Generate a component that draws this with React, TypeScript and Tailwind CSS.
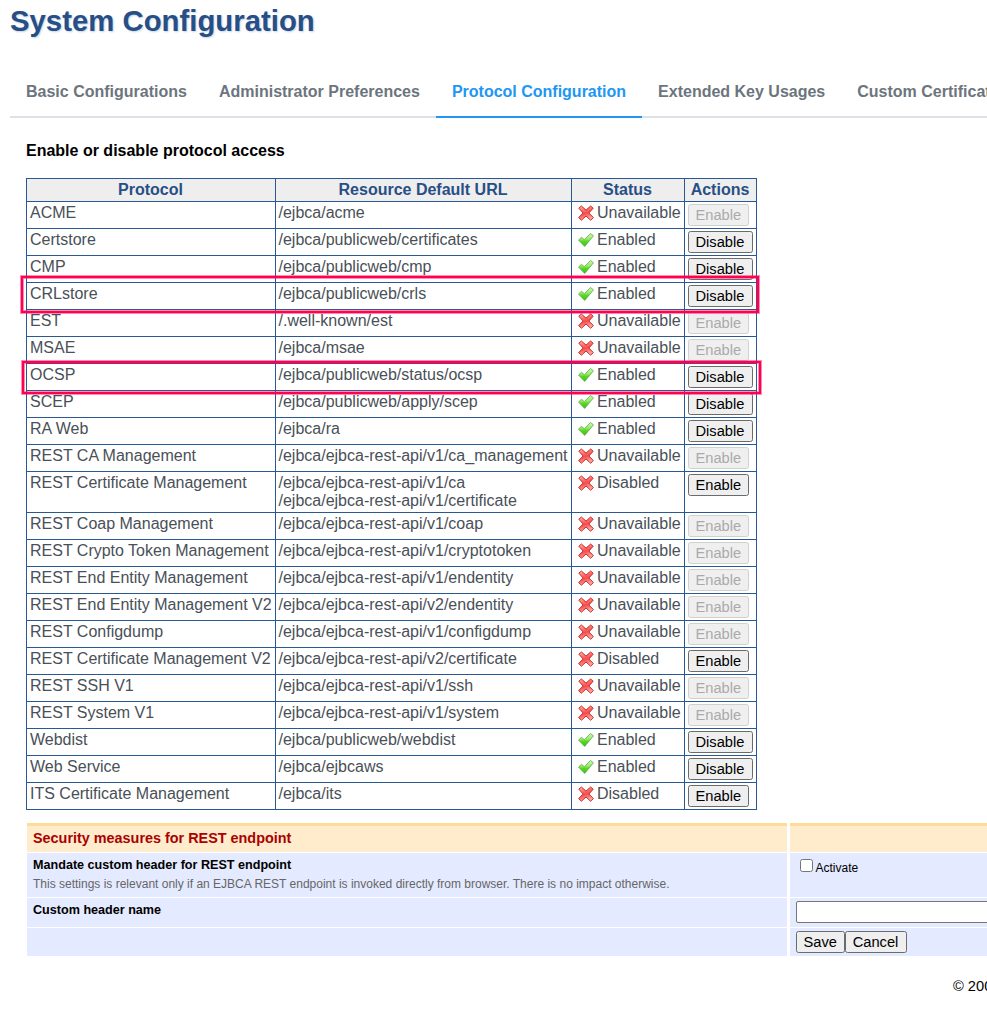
import React from "react";

type Status = "Unavailable" | "Enabled" | "Disabled";

const protocols: [string, string[], Status][] = [
  ["ACME", ["/ejbca/acme"], "Unavailable"],
  ["Certstore", ["/ejbca/publicweb/certificates"], "Enabled"],
  ["CMP", ["/ejbca/publicweb/cmp"], "Enabled"],
  ["CRLstore", ["/ejbca/publicweb/crls"], "Enabled"],
  ["EST", ["/.well-known/est"], "Unavailable"],
  ["MSAE", ["/ejbca/msae"], "Unavailable"],
  ["OCSP", ["/ejbca/publicweb/status/ocsp"], "Enabled"],
  ["SCEP", ["/ejbca/publicweb/apply/scep"], "Enabled"],
  ["RA Web", ["/ejbca/ra"], "Enabled"],
  ["REST CA Management", ["/ejbca/ejbca-rest-api/v1/ca_management"], "Unavailable"],
  ["REST Certificate Management", ["/ejbca/ejbca-rest-api/v1/ca", "/ejbca/ejbca-rest-api/v1/certificate"], "Disabled"],
  ["REST Coap Management", ["/ejbca/ejbca-rest-api/v1/coap"], "Unavailable"],
  ["REST Crypto Token Management", ["/ejbca/ejbca-rest-api/v1/cryptotoken"], "Unavailable"],
  ["REST End Entity Management", ["/ejbca/ejbca-rest-api/v1/endentity"], "Unavailable"],
  ["REST End Entity Management V2", ["/ejbca/ejbca-rest-api/v2/endentity"], "Unavailable"],
  ["REST Configdump", ["/ejbca/ejbca-rest-api/v1/configdump"], "Unavailable"],
  ["REST Certificate Management V2", ["/ejbca/ejbca-rest-api/v2/certificate"], "Disabled"],
  ["REST SSH V1", ["/ejbca/ejbca-rest-api/v1/ssh"], "Unavailable"],
  ["REST System V1", ["/ejbca/ejbca-rest-api/v1/system"], "Unavailable"],
  ["Webdist", ["/ejbca/publicweb/webdist"], "Enabled"],
  ["Web Service", ["/ejbca/ejbcaws"], "Enabled"],
  ["ITS Certificate Management", ["/ejbca/its"], "Disabled"],
];

const tabs = [
  "Basic Configurations",
  "Administrator Preferences",
  "Protocol Configuration",
  "Extended Key Usages",
  "Custom Certificate Extensions",
];

function CrossIcon() {
  return (
    <svg width="16" height="16" viewBox="0 0 16 16" className="shrink-0">
      <defs>
        <linearGradient id="crossFill" x1="0" y1="0" x2="0.3" y2="1">
          <stop offset="0" stopColor="#ffb8b0" />
          <stop offset="0.45" stopColor="#f86460" />
          <stop offset="0.6" stopColor="#f44c4c" />
          <stop offset="1" stopColor="#ffa6a2" />
        </linearGradient>
      </defs>
      <path
        d="M3.4 1 8 5.1 12.6 1l2.6 2.2L10.9 8l4.5 4.6-2.8 2.6L8 11l-4.6 4.2-2.8-2.6L5.1 8 .8 3.2z"
        fill="url(#crossFill)"
        stroke="#cc2c2a"
        strokeWidth="1"
        strokeLinejoin="round"
      />
    </svg>
  );
}

function CheckIcon() {
  return (
    <svg width="16" height="16" viewBox="0 0 16 16" className="shrink-0">
      <defs>
        <linearGradient id="checkFill" x1="0" y1="0" x2="0" y2="1">
          <stop offset="0" stopColor="#d0f8b4" />
          <stop offset="0.45" stopColor="#94ea64" />
          <stop offset="0.6" stopColor="#58d820" />
          <stop offset="1" stopColor="#3cc40c" />
        </linearGradient>
      </defs>
      <path
        d="M0.5 8 3.5 5.3l2.9 2.5L12.4 1.5l3.1 2.3L6.7 14.4z"
        fill="url(#checkFill)"
        stroke="#5aa850"
        strokeWidth="0.8"
        strokeLinejoin="round"
      />
    </svg>
  );
}

function Button({ children, disabled }: { children: React.ReactNode; disabled?: boolean }) {
  return (
    <button
      disabled={disabled}
      className="block h-[22px] rounded-[2.5px] border border-[#6b6b6b] bg-[#efefef] pr-[7.3px] pl-[6.5px] text-[14.667px] leading-[20px] text-black disabled:border-[#d0d0d0] disabled:text-[#aaaaaa]"
    >
      {children}
    </button>
  );
}

function Cell({ children, className = "" }: { children?: React.ReactNode; className?: string }) {
  return <div className={"border-r border-b border-[#2a5892] " + className}>{children}</div>;
}

export default function App() {
  return (
    <div className="relative h-[1011px] w-[987px] overflow-hidden bg-white pl-[10px] font-['Liberation_Sans',Arial,sans-serif]">
      <h1 className="h-[68px] pt-[4px] text-[29.333px] leading-[34px] font-bold text-[#274f86] [text-shadow:1px_1px_2px_#c4d4e4]">
        System Configuration
      </h1>
      <nav className="flex h-[50px] w-[1200px] border-b-2 border-[#dee2e6] text-base font-bold whitespace-nowrap text-[#6c757d]">
        {tabs.map((t, i) => (
          <a
            key={t}
            className={
              i === 2
                ? "h-[50px] border-b-2 border-[#2196f3] px-4 pt-[15px] leading-[18px] text-[#2196f3]"
                : "px-4 pt-[15px] leading-[18px]"
            }
          >
            {t}
          </a>
        ))}
      </nav>
      <main className="pl-4">
        <h2 className="h-[60px] pt-[24px] text-base leading-[18px] font-bold text-black">
          Enable or disable protocol access
        </h2>
        <section className="w-[731px] border-t border-l border-[#2a5892] text-base leading-[18px] text-[#495057]">
          <div className="grid h-[23px] grid-cols-[249px_296px_113px_72px] bg-[#eeeeee] text-center font-bold text-[#274f86]">
            {["Protocol", "Resource Default URL", "Status", "Actions"].map((h) => (
              <Cell key={h} className="pt-[2px] pr-px">
                {h}
              </Cell>
            ))}
          </div>
          {protocols.map(([name, urls, status]) => (
            <div
              key={name}
              className={
                "grid grid-cols-[249px_296px_113px_72px] whitespace-nowrap " + (urls.length > 1 ? "h-[41px]" : "h-[27px]")
              }
            >
              <Cell className="pt-[2px] pl-[3px]">{name}</Cell>
              <Cell className="pt-[2px] pl-[2.5px]">
                {urls.map((u) => (
                  <div key={u}>{u}</div>
                ))}
              </Cell>
              <Cell className="flex items-start gap-[3px] pt-[2px] pl-[6px]">
                <span className="pt-px">{status === "Enabled" ? <CheckIcon /> : <CrossIcon />}</span>
                <span>{status}</span>
              </Cell>
              <Cell className="pt-[2px] pl-[3px]">
                <Button disabled={status === "Unavailable"}>{status === "Enabled" ? "Disable" : "Enable"}</Button>
              </Cell>
            </div>
          ))}
        </section>
        <section className="mt-[13px] ml-px grid w-[1100px] grid-cols-[760px_1fr] grid-rows-[29px_44px_29px_28px] gap-x-[3px] gap-y-px text-[12.6px] text-black">
          <div className="border-t-[3px] border-[#ffdb99] bg-[#ffeccc] pt-[4px] pl-[6px] text-[14.4px] leading-[17px] font-bold text-[#aa0000]">
            Security measures for REST endpoint
          </div>
          <div className="border-t-[3px] border-[#ffdb99] bg-[#ffeccc]" />
          <div className="bg-[#e4eaff] pl-[6px]">
            <div className="pt-[5px] leading-[14px] font-bold">Mandate custom header for REST endpoint</div>
            <div className="pt-[5px] text-[12px] leading-[14px] text-[#666666]">
              This settings is relevant only if an EJBCA REST endpoint is invoked directly from browser. There is no
              impact otherwise.
            </div>
          </div>
          <label className="flex items-start bg-[#e4eaff] pt-[6px] pl-[10px]">
            <input
              type="checkbox"
              className="h-[13px] w-[13px] appearance-none rounded-[2.5px] border border-[#767676] bg-white"
            />
            <span className="pt-[2px] pl-[2.5px] text-[12px] leading-[14px]">Activate</span>
          </label>
          <div className="bg-[#e4eaff] pt-[5px] pl-[6px] leading-[14px] font-bold">Custom header name</div>
          <div className="bg-[#e4eaff] pt-[3px] pl-[6px]">
            <input
              type="text"
              className="block h-[22px] w-[300px] rounded-[2px] border border-[#767676] bg-white"
            />
          </div>
          <div className="bg-[#e4eaff]" />
          <div className="flex items-start bg-[#e4eaff] pt-[3px] pl-[6px]">
            <Button>Save</Button>
            <Button>Cancel</Button>
          </div>
        </section>
      </main>
      <footer className="mt-[22px] w-[1100px] pl-[943px] text-[14.667px] leading-[17px] text-black">
        © 2002
      </footer>
      <div className="pointer-events-none absolute top-[276px] left-[21px] h-[37px] w-[738px] border-2 border-[#ff0052] ring-1 ring-[#ff0052]/45">
        <div className="h-full w-full border border-[#ff0052]/45" />
      </div>
      <div className="pointer-events-none absolute top-[361px] left-[22px] h-[33px] w-[739px] border-2 border-[#ff0052] ring-1 ring-[#ff0052]/45">
        <div className="h-full w-full border border-[#ff0052]/45" />
      </div>
    </div>
  );
}
